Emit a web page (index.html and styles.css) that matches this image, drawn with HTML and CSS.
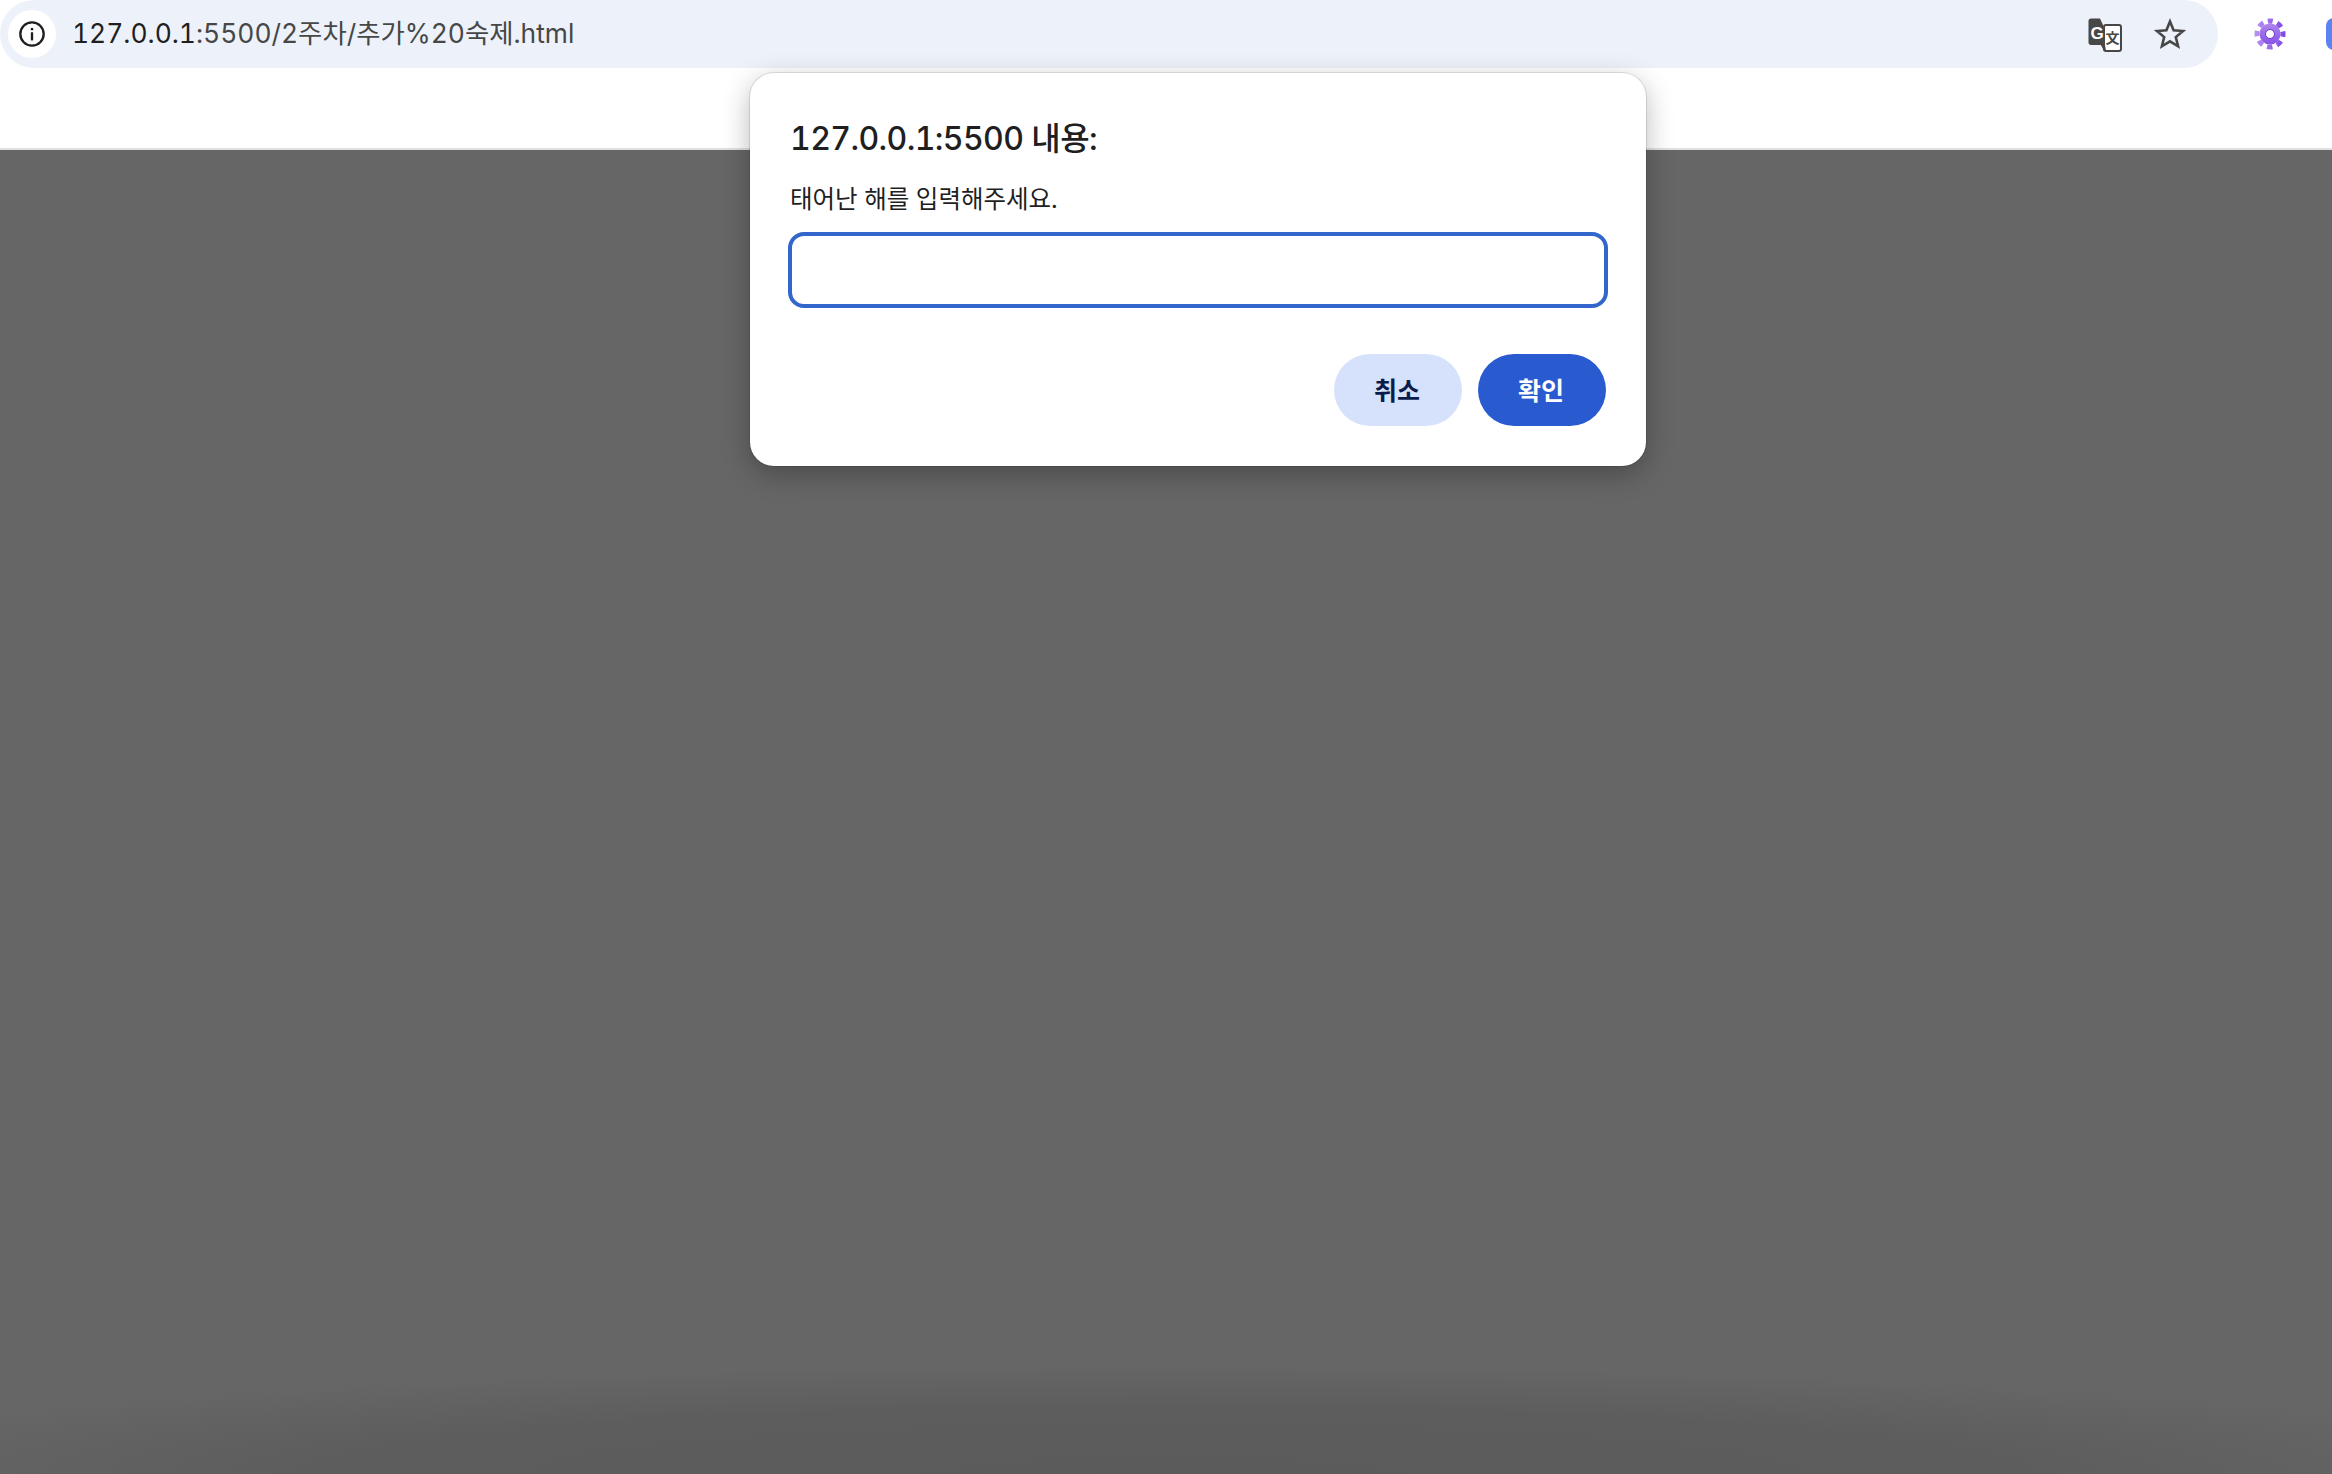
FILE: index.html
```html
<!DOCTYPE html>
<html lang="ko">
<head>
    <meta charset="UTF-8">
    <title>2주차 추가 숙제</title>
    <link rel="stylesheet" href="styles.css">
</head>
<body>

    <header class="toolbar">
        <div class="urlbar">
            <span class="site-info">
                <svg width="28" height="28" viewBox="0 0 24 24">
                    <circle cx="12" cy="12" r="10" fill="none" stroke="#1f1f1f" stroke-width="2"/>
                    <rect x="11" y="10.5" width="2" height="7" fill="#1f1f1f"/>
                    <rect x="11" y="6.800" width="2" height="2" fill="#1f1f1f"/>
                </svg>
            </span>
            <div class="url"><span class="url-host">127.0.0.1</span>:5500/2주차/추가%20숙제.html</div>
            <svg class="translate-icon" width="34" height="34" viewBox="0 0 34 34">
                <path d="M3 0.500H12L15 7L19 27L16 33L13 27H3C1.500 27 0.500 26 0.500 24.500V3C0.500 1.500 1.500 0.500 3 0.500Z" fill="#474747"/>
                <rect x="16" y="7" width="17" height="26" rx="2" fill="#fff" stroke="#474747" stroke-width="2"/>
                <path d="M13 27H17L18 33Z" fill="#474747"/>
                <text class="translate-g" x="2.500" y="20.500">G</text>
                <text class="translate-x" x="17.500" y="25">文</text>
            </svg>
            <svg class="star-icon" width="32" height="32" viewBox="0 0 32 32">
                <path d="M16 3.500L19.600 12.300L29 13L21.800 19.100L24.100 28.300L16 23.300L7.900 28.300L10.200 19.100L3 13L12.400 12.300Z" fill="none" stroke="#474747" stroke-width="2.600" stroke-linejoin="miter"/>
            </svg>
        </div>
        <svg class="gear-icon" width="32" height="32" viewBox="0 0 32 32">
            <defs>
                <linearGradient id="gear-fill" gradientUnits="userSpaceOnUse" x1="0" y1="0" x2="0" y2="32">
                    <stop offset="0" stop-color="#b995ee"/>
                    <stop offset="1" stop-color="#7c44e4"/>
                </linearGradient>
            </defs>
            <circle cx="16" cy="16" r="10.500" fill="url(#gear-fill)"/>
            <circle cx="16" cy="16" r="13" fill="none" stroke="url(#gear-fill)" stroke-width="5" stroke-dasharray="5.500 4.710" stroke-dashoffset="2.750" transform="rotate(-90 16 16)"/>
            <circle cx="16" cy="16" r="4.500" fill="#fff" stroke="#6d35d8" stroke-width="1"/>
        </svg>
        <span class="ext-blue"></span>
    </header>

    <main class="page"></main>

    <!-- prompt dialog -->
    <div class="dialog">
        <h1 class="dialog-title">127.0.0.1:5500 내용:</h1>
        <p class="dialog-msg">태어난 해를 입력해주세요.</p>
        <input class="dialog-input" type="text">
        <div class="dialog-btns">
            <button class="btn btn-cancel">취소</button>
            <button class="btn btn-ok">확인</button>
        </div>
    </div>

</body>
</html>
```

FILE: styles.css
```css
html,
body {
    height: 100%;
}

body {
    margin: 0;
    display: flex;
    flex-direction: column;
    font-family: Inter, "Noto Sans CJK KR", sans-serif;
    font-variant-numeric: tabular-nums;
    background-color: #ffffff;
    overflow: hidden;
}

.toolbar {
    height: 148px;
    flex-shrink: 0;
    display: flex;
    align-items: flex-start;
    border-bottom: 2px solid #e0e0e0;
    overflow: hidden;
}

.urlbar {
    width: 2218px;
    height: 68px;
    flex-shrink: 0;
    display: flex;
    align-items: center;
    background-color: #edf2fa;
    border-radius: 34px;
}

.site-info {
    width: 48px;
    height: 48px;
    margin-left: 8px;
    flex-shrink: 0;
    display: flex;
    align-items: center;
    justify-content: center;
    background-color: #ffffff;
    border-radius: 50%;
}

.url {
    margin-left: 16px;
    padding-bottom: 5px;
    font-size: 26.4px;
    color: #474747;
    white-space: nowrap;
}

.url-host {
    color: #1f1f1f;
}

.translate-icon {
    margin-left: auto;
    margin-top: 1px;
}

.translate-g {
    font-family: "Liberation Sans", sans-serif;
    font-size: 17px;
    font-weight: 700;
    fill: #ffffff;
}

.translate-x {
    font-family: "Noto Sans CJK KR", sans-serif;
    font-size: 14px;
    font-weight: 700;
    fill: #474747;
}

.star-icon {
    margin-left: 32px;
    margin-right: 32px;
}

.gear-icon {
    margin-left: 36px;
    margin-top: 18px;
    flex-shrink: 0;
}

.ext-blue {
    width: 24px;
    height: 32px;
    margin-left: 40px;
    margin-top: 18px;
    flex-shrink: 0;
    background-color: #5b82f0;
    border-radius: 8px;
}

.page {
    flex: 1;
    background-color: #666666;
    background-image: radial-gradient(ellipse 1400px 110px at 50% 100%, #5b5b5b, #5d5d5d 60%, #666666);
}

.dialog {
    position: absolute;
    left: 750px;
    top: 73px;
    width: 896px;
    height: 393px;
    box-sizing: border-box;
    padding: 46px 38px 0;
    background-color: #ffffff;
    border-radius: 24px;
    box-shadow: 0 0 0 1px rgba(0, 0, 0, 0.1), 0 8px 28px rgba(0, 0, 0, 0.28);
}

.dialog-title {
    margin: 0;
    padding-left: 2px;
    font-size: 32px;
    line-height: 40px;
    font-weight: 500;
    letter-spacing: -0.6px;
    color: #1f1f1f;
}

.dialog-msg {
    margin: 23px 0 0;
    padding-left: 2px;
    font-size: 24.5px;
    line-height: 34px;
    color: #1f1f1f;
}

.dialog-input {
    display: block;
    width: 100%;
    height: 76px;
    margin-top: 16px;
    box-sizing: border-box;
    border: 4px solid #3366cc;
    border-radius: 16px;
    background-color: #ffffff;
    outline: none;
}

.dialog-btns {
    display: flex;
    justify-content: flex-end;
    gap: 16px;
    margin-top: 46px;
    padding-right: 2px;
}

.btn {
    width: 128px;
    height: 72px;
    padding: 0 2px 2px 0;
    border: none;
    border-radius: 36px;
    font-family: Inter, "Noto Sans CJK KR", sans-serif;
    font-size: 25px;
    font-weight: 600;
}

.btn-cancel {
    background-color: #d6e2fb;
    color: #0b1c4a;
}

.btn-ok {
    background-color: #2a5ad0;
    color: #ffffff;
}
```
